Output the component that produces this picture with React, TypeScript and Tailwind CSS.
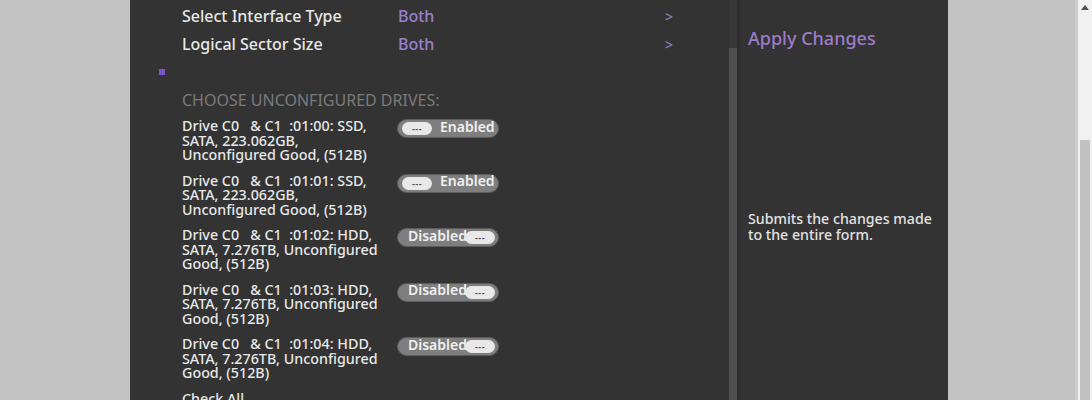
import React from "react";

const drives = [
  { id: "01:00", lines: ["Drive C0   & C1  :01:00: SSD,", "SATA, 223.062GB,", "Unconfigured Good, (512B)"], on: true },
  { id: "01:01", lines: ["Drive C0   & C1  :01:01: SSD,", "SATA, 223.062GB,", "Unconfigured Good, (512B)"], on: true },
  { id: "01:02", lines: ["Drive C0   & C1  :01:02: HDD,", "SATA, 7.276TB, Unconfigured", "Good, (512B)"], on: false },
  { id: "01:03", lines: ["Drive C0   & C1  :01:03: HDD,", "SATA, 7.276TB, Unconfigured", "Good, (512B)"], on: false },
  { id: "01:04", lines: ["Drive C0   & C1  :01:04: HDD,", "SATA, 7.276TB, Unconfigured", "Good, (512B)"], on: false },
];

function Knob() {
  return (
    <div className="w-[30px] h-[13px] rounded-full bg-[#e8e8e8] flex items-center justify-center">
      <span className="text-[#555] text-[9px] leading-none font-bold tracking-[0.5px]">---</span>
    </div>
  );
}

function Toggle({ on }: { on: boolean }) {
  return (
    <div className="relative w-[102px] h-[19px] rounded-full bg-[#7e7e7e] border border-[#5c5c5c] flex items-center">
      {on ? (
        <>
          <div className="ml-[4px]">
            <Knob />
          </div>
          <span className="ml-[8px] -mt-[4px] text-[14px] leading-none text-[#f0f0f0] font-semibold">Enabled</span>
        </>
      ) : (
        <>
          <span className="ml-[10px] -mt-[4px] text-[14px] leading-none text-[#f0f0f0] font-semibold">Disabled</span>
          <div className="absolute right-[3px] top-[2px]">
            <Knob />
          </div>
        </>
      )}
    </div>
  );
}

export default function App() {
  return (
    <div
      className="w-[1092px] h-[400px] overflow-hidden bg-[#c2c2c2] flex"
      style={{ fontFamily: '"Noto Sans", "Open Sans", sans-serif' }}
    >
      <div className="w-[130px] shrink-0" />
      <div className="w-[818px] shrink-0 bg-[#333333] flex">
        {/* main form column */}
        <div className="w-[599px] shrink-0 pt-[2px]">
          <div className="h-[28px] flex items-center text-[16px] text-[#e8e8e8] font-medium">
            <div className="w-[268px] pl-[52px]">Select Interface Type</div>
            <div className="w-[267px] text-[#9b80d0]">Both</div>
            <div className="text-[#8b80b8] text-[14px]">&gt;</div>
          </div>
          <div className="h-[28px] flex items-center text-[16px] text-[#e8e8e8] font-medium">
            <div className="w-[268px] pl-[52px]">Logical Sector Size</div>
            <div className="w-[267px] text-[#9b80d0]">Both</div>
            <div className="text-[#8b80b8] text-[14px]">&gt;</div>
          </div>
          <div className="h-[28px] flex items-center pl-[29px]">
            <div className="w-[6px] h-[6px] bg-[#7d52cc]" />
          </div>
          <div className="h-[28px] flex items-center pl-[52px] text-[16px] text-[#7a7a7a] uppercase">
            Choose Unconfigured Drives:
          </div>
          <div className="mt-[5px] flex flex-col gap-[11px] pl-[52px]">
            {drives.map((d) => (
              <div key={d.id} className="flex">
                <div className="w-[214px] text-[14.3px] leading-[14.5px] text-[#e8e8e8] font-medium whitespace-pre">
                  {d.lines.map((l, i) => (
                    <div key={i}>{l}</div>
                  ))}
                </div>
                <div className="ml-[1px]">
                  <Toggle on={d.on} />
                </div>
              </div>
            ))}
            <div className="text-[14.3px] leading-[14.5px] text-[#e8e8e8] font-medium">Check All</div>
          </div>
        </div>
        {/* inner scrollbar */}
        <div className="w-[8px] shrink-0 flex flex-col bg-[#383838]">
          <div className="h-[48px]" />
          <div className="flex-1 bg-[#4e4e4e]" />
        </div>
        <div className="w-[3px] shrink-0 bg-[#2e2e2e]" />
        {/* help column */}
        <div className="flex-1 pl-[8px] pt-[24px]">
          <div className="text-[18px] leading-[28px] text-[#9b7cc8] font-medium">Apply Changes</div>
          <div className="mt-[159px] text-[14.2px] leading-[16px] text-[#e2e2e2] font-medium">
            Submits the changes made
            <br />
            to the entire form.
          </div>
        </div>
      </div>
      <div className="flex-1" />
      <div className="w-[3px] shrink-0 bg-[#cdcdcd]" />
      {/* browser scrollbar */}
      <div className="w-[14px] shrink-0 bg-[#f1f1f1] flex flex-col items-center">
        <div className="h-[14px] flex items-center justify-center">
          <svg width="8" height="5" viewBox="0 0 8 5">
            <path d="M0 5 L4 0 L8 5 Z" fill="#505050" />
          </svg>
        </div>
        <div className="h-[126px]" />
        <div className="w-[10px] flex-1 bg-[#c1c1c1]" />
      </div>
    </div>
  );
}
